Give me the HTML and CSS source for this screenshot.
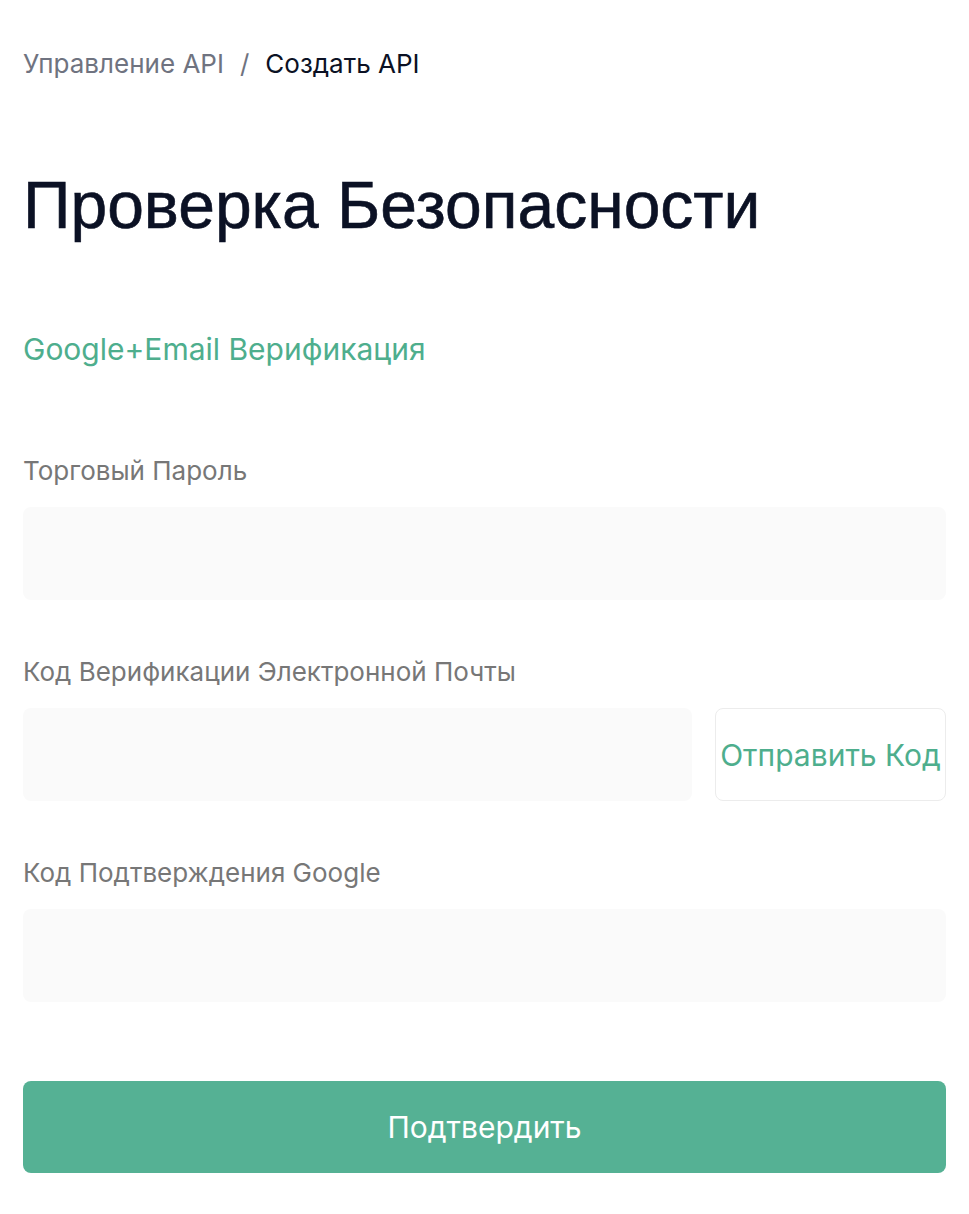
FILE: index.html
```html
<!DOCTYPE html>
<html lang="ru">
<head>
<meta charset="utf-8">
<link rel="stylesheet" href="styles.css">
</head>
<body>
<div class="page">
  <nav class="crumbs">
    <span class="crumb-link">Управление API</span>
    <span class="crumb-sep">/</span>
    <span class="crumb-current">Создать API</span>
  </nav>
  <h1 class="title">Проверка Безопасности</h1>
  <div class="method">Google+Email Верификация</div>
  <div class="field">
    <label class="label">Торговый Пароль</label>
    <div class="input"></div>
  </div>
  <div class="field">
    <label class="label">Код Верификации Электронной Почты</label>
    <div class="row">
      <div class="input grow"></div>
      <button class="send">Отправить Код</button>
    </div>
  </div>
  <div class="field">
    <label class="label">Код Подтверждения Google</label>
    <div class="input"></div>
  </div>
  <button class="submit">Подтвердить</button>
</div>
</body>
</html>
```

FILE: styles.css
```css
* { box-sizing: border-box; }
html, body { margin: 0; padding: 0; background: #fff; }
body { font-family: Inter, "Noto Sans", sans-serif; }
.page { padding: 46px 23px 0 23px; width: 969px; }
.crumbs { display: flex; align-items: center; font-size: 26px; line-height: 36px; }
.crumb-link { color: #6f7380; }
.crumb-sep { color: #6f7380; margin: 0 16px; }
.crumb-current { color: #0b1124; }
.title { margin: 78px 0 0 0; font-family: "Liberation Sans", Arial, sans-serif; font-weight: 400; font-size: 66px; line-height: 90px; color: #0b1124; -webkit-text-stroke: 0.6px #0b1124; }
.method { margin-top: 79px; font-size: 30px; line-height: 40px; color: #4eae8d; }
.field { margin-top: 84px; }
.field + .field { margin-top: 54px; }
.label { display: block; font-size: 26px; line-height: 36px; color: #777; margin-bottom: 18px; }
.input { height: 93px; background: #fafafa; border-radius: 8px; }
.row { display: flex; gap: 23px; }
.grow { flex: 1; }
.send { width: 231px; height: 93px; background: #fff; border: 1.5px solid #ececec; border-radius: 8px; font-family: inherit; font-size: 30px; color: #4eae8d; padding: 0; white-space: nowrap; }
.submit { display: block; width: 100%; margin-top: 79px; height: 92px; border: none; border-radius: 8px; background: #55b194; color: #fff; font-family: inherit; font-size: 30px; }
```
